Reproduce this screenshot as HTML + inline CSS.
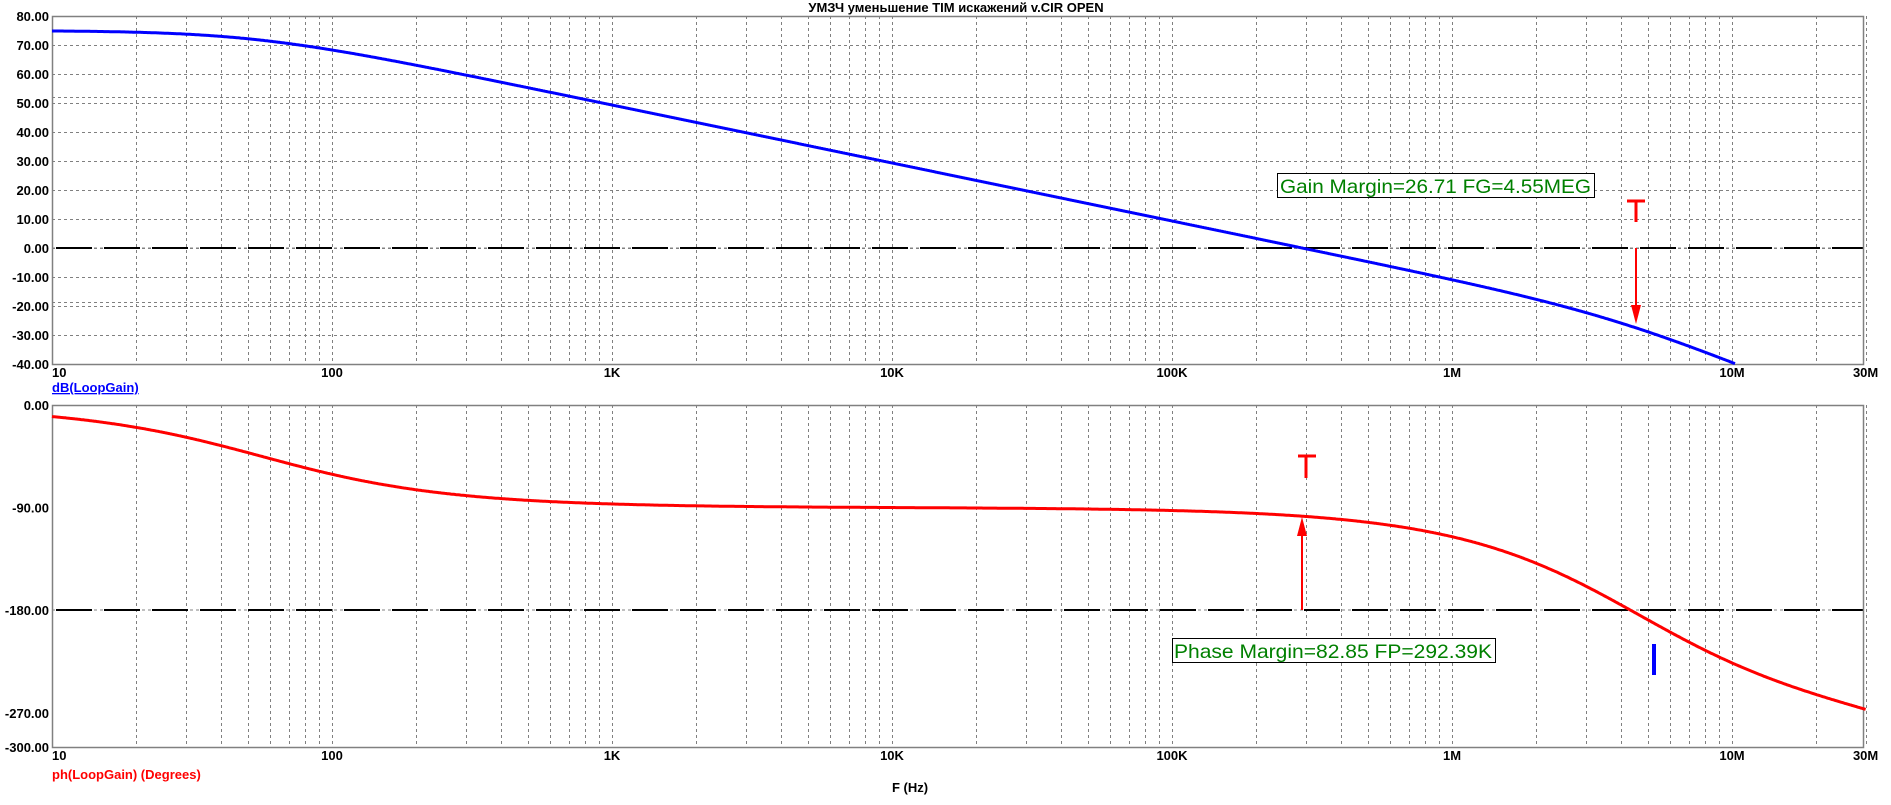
<!DOCTYPE html>
<html><head><meta charset="utf-8"><style>
html,body{margin:0;padding:0;background:#fff;width:1891px;height:805px;overflow:hidden}
svg{display:block}
text{font-family:"Liberation Sans",Arial,sans-serif;font-weight:bold;font-size:13px}
text.box{font-weight:normal;font-size:19.5px}
</style></head><body>
<svg id="s" width="1891" height="805" xmlns="http://www.w3.org/2000/svg">
<text x="956" y="12" text-anchor="middle">УМЗЧ уменьшение TIM искажений v.CIR OPEN</text>
<g id="grid"></g>
<g id="lab"></g>
<path id="gain" fill="none" stroke="#0000ff" stroke-width="3"/>
<path id="phase" fill="none" stroke="#ff0000" stroke-width="3"/>
<line x1="1627" y1="201" x2="1645" y2="201" stroke="#f00" stroke-width="3"/>
<line x1="1636" y1="201" x2="1636" y2="222" stroke="#f00" stroke-width="3"/>
<line x1="1636" y1="248" x2="1636" y2="312" stroke="#f00" stroke-width="2"/>
<polygon points="1631,305 1641,305 1636,324" fill="#f00"/>
<rect x="1277.5" y="173.5" width="317" height="24" fill="#fff" stroke="#000" stroke-width="1"/>
<text class="box" x="1280" y="193" fill="#008000" textLength="311" lengthAdjust="spacingAndGlyphs">Gain Margin=26.71 FG=4.55MEG</text>
<line x1="1298" y1="456" x2="1316" y2="456" stroke="#f00" stroke-width="3"/>
<line x1="1306" y1="456" x2="1306" y2="478" stroke="#f00" stroke-width="3"/>
<line x1="1302" y1="610" x2="1302" y2="532" stroke="#f00" stroke-width="2"/>
<polygon points="1297,536 1307,536 1302,517" fill="#f00"/>
<rect x="1172.5" y="638.5" width="323" height="24" fill="#fff" stroke="#000" stroke-width="1"/>
<text class="box" x="1174" y="658" fill="#008000" textLength="318" lengthAdjust="spacingAndGlyphs">Phase Margin=82.85 FP=292.39K</text>
<rect x="1652" y="644" width="4" height="31" fill="#0000ff"/>
<text x="52" y="392" fill="#0000ff" text-decoration="underline">dB(LoopGain)</text>
<text x="52" y="779" fill="#ff0000">ph(LoopGain) (Degrees)</text>
<text x="910" y="792" text-anchor="middle">F (Hz)</text>
</svg>
<script>
var NS="http://www.w3.org/2000/svg";
var L=52,R=1864,D=280;
function X(f){return L+D*Math.log10(f/10);}
function el(p,t,a,txt){var e=document.createElementNS(NS,t);for(var k in a)e.setAttribute(k,a[k]);if(txt!=null)e.textContent=txt;p.appendChild(e);return e;}
var g=document.getElementById('grid'),lb=document.getElementById('lab');
var plots=[{t:16,b:364},{t:405,b:747}];
plots.forEach(function(p){
  for(var dec=10;dec<=1e7;dec*=10){for(var m=1;m<=9;m++){var f=dec*m;if(f>30e6)break;var x=Math.round(X(f))+0.5;if(x<=L+1)continue;
    el(g,'line',{x1:x,y1:p.t,x2:x,y2:p.b,stroke:'#808080','stroke-width':1,'stroke-dasharray':'3,3'});}}
  var x2=Math.round(X(20e6))+0.5;
  el(g,'line',{x1:x2,y1:p.t,x2:x2,y2:p.b,stroke:'#808080','stroke-width':1,'stroke-dasharray':'3,3'});
});
for(var v=70;v>-40;v-=10){var y=364-(v+40)*2.9;y=Math.round(y)+0.5;
  el(g,'line',{x1:L,y1:y,x2:R,y2:y,stroke:'#808080','stroke-width':1,'stroke-dasharray':'3,3'});}
for(var v=80;v>=-40;v-=10){var y=364-(v+40)*2.9;
  el(lb,'text',{x:49,y:y+5,'text-anchor':'end'},v.toFixed(2));}
[-90,-270].forEach(function(v){var y=Math.round(405-v*-1.14)+0.5;
  el(g,'line',{x1:L,y1:y,x2:R,y2:y,stroke:'#808080','stroke-width':1,'stroke-dasharray':'3,3'});});
[[0,'0.00'],[-90,'-90.00'],[-180,'-180.00'],[-270,'-270.00'],[-300,'-300.00']].forEach(function(a){
  el(lb,'text',{x:49,y:405+(-a[0])*1.14+5,'text-anchor':'end'},a[1]);});
el(g,'line',{x1:L,y1:248,x2:R,y2:248,stroke:'#808080','stroke-width':1,'stroke-dasharray':'3,3'});
el(g,'line',{x1:L,y1:610,x2:R,y2:610,stroke:'#808080','stroke-width':1,'stroke-dasharray':'3,3'});
el(g,'line',{x1:L+4,y1:248,x2:R,y2:248,stroke:'#000','stroke-width':2,'stroke-dasharray':'36,12'});
el(g,'line',{x1:L+4,y1:610,x2:R,y2:610,stroke:'#000','stroke-width':2,'stroke-dasharray':'36,12'});
plots.forEach(function(p){el(g,'rect',{x:L+0.5,y:p.t+0.5,width:R-L-1,height:p.b-p.t,fill:'none',stroke:'#808080','stroke-width':1.5});});
var xl=[[10,'10'],[100,'100'],[1e3,'1K'],[1e4,'10K'],[1e5,'100K'],[1e6,'1M'],[1e7,'10M'],[30e6,'30M']];
[377,760].forEach(function(yy){xl.forEach(function(a){
  el(lb,'text',{x:a[0]==10?L:X(a[0]),y:yy,'text-anchor':a[0]==10?'start':'middle'},a[1]);});});
var gp='',pp='';
for(var i=0;i<=1500;i++){var lf=1+i/1500*Math.log10(3e6);var f=Math.pow(10,lf);
  var gdb=75-10*Math.log10(1+Math.pow(f/52,2))-10*Math.log10(1+Math.pow(f/3.9e6,2));
  var x=X(f).toFixed(1);
  if(gdb>=-40){var y=(364-(gdb+40)*2.9).toFixed(1);gp+=(gp?'L':'M')+x+','+y;}
  var ph=-Math.atan(f/56)*180/Math.PI-2*Math.atan(f/4.5e6)*180/Math.PI-360*f*1.3e-9;
  pp+=(pp?'L':'M')+x+','+(405-ph*1.14).toFixed(1);}
document.getElementById('gain').setAttribute('d',gp);
document.getElementById('phase').setAttribute('d',pp);
</script>
</body></html>
